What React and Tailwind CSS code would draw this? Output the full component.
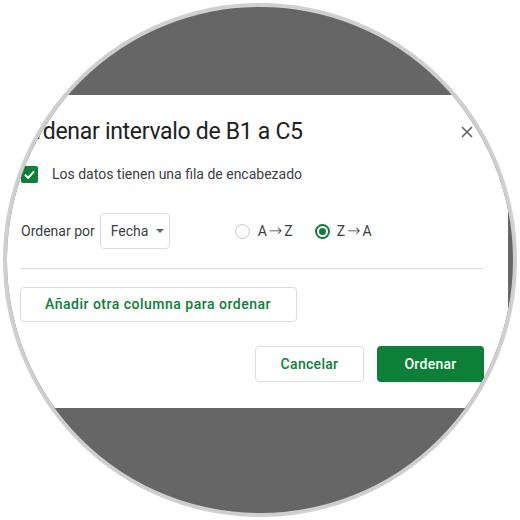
import React from "react";

const green = "#0b8036";

const Radio = ({ checked }) =>
  checked ? (
    <span className="w-[15px] h-[15px] rounded-full border-2 border-[#0b8036] flex items-center justify-center">
      <span className="w-[7px] h-[7px] rounded-full bg-[#0b8036]" />
    </span>
  ) : (
    <span className="w-[15px] h-[15px] rounded-full border border-[#c4c4c4]" />
  );

const Arrow = ({ from, to }) => (
  <span className="text-[14px] text-[#3c4043] flex items-center h-[18px]">
    {from}
    <span
      className="mx-[2px] text-[16px] leading-[18px] font-light"
      style={{ fontFamily: "'DejaVu Sans', sans-serif" }}
    >
      →
    </span>
    {to}
  </span>
);

const App = () => {
  return (
    <div
      className="w-[520px] h-[520px] bg-white flex items-center justify-center"
      style={{ fontFamily: "Roboto, 'Liberation Sans', sans-serif" }}
    >
      <div className="w-[514px] h-[514px] rounded-full border-4 border-[#cfcfcf] bg-[#666666] overflow-hidden flex flex-col">
        {/* gray band above the dialog */}
        <div className="h-[88px] shrink-0" />

        {/* dialog */}
        <div className="bg-white h-[313px] w-[501px] shrink-0 pl-[13px] pr-[24px] pt-[21px] flex flex-col">
          <div className="flex items-center justify-between h-[32px]">
            <h1 className="text-[23px] leading-[32px] text-[#202124] tracking-[-0.3px]">
              Ordenar intervalo de B1 a C5
            </h1>
            <svg width="12" height="12" viewBox="0 0 12 12" className="mr-[11px]">
              <path d="M1 1 L11 11 M11 1 L1 11" stroke="#5f6368" strokeWidth="1.6" />
            </svg>
          </div>

          {/* header checkbox */}
          <div className="flex items-center mt-[17px] h-[18px]">
            <span className="w-[17px] h-[17px] rounded-[2px] bg-[#0b8036] flex items-center justify-center ml-[1px]">
              <svg width="13" height="13" viewBox="0 0 13 13">
                <path d="M2 6.8 L5.2 9.8 L11 3.4" fill="none" stroke="white" strokeWidth="2" />
              </svg>
            </span>
            <span className="ml-[14px] text-[14px] text-[#3c4043]">
              Los datos tienen una fila de encabezado
            </span>
          </div>

          {/* sort row */}
          <div className="flex items-center mt-[30px] h-[36px]">
            <span className="text-[14px] text-[#3c4043] ml-[1px]">Ordenar por</span>
            <div className="ml-[5px] w-[70px] h-[36px] border border-[#dadce0] rounded-[4px] flex items-center pl-[10px]">
              <span className="text-[14px] text-[#3c4043]">Fecha</span>
              <svg width="8" height="4" viewBox="0 0 8 4" className="ml-[8px]">
                <path d="M0 0 L8 0 L4 4 Z" fill="#5f6368" />
              </svg>
            </div>
            <div className="ml-[65px] flex items-center gap-[8px]">
              <Radio />
              <Arrow from="A" to="Z" />
            </div>
            <div className="ml-[22px] flex items-center gap-[7px]">
              <Radio checked />
              <Arrow from="Z" to="A" />
            </div>
          </div>

          <div className="mt-[19px] h-px bg-[#dadce0] mr-[1px]" />

          <div className="mt-[18px]">
            <button className="h-[35px] w-[277px] border border-[#dadce0] rounded-[4px] text-left pl-[24px] text-[14px] font-medium text-[#0b8036] tracking-[0.5px]">
              Añadir otra columna para ordenar
            </button>
          </div>

          <div className="mt-[24px] flex justify-end gap-[13px]">
            <button className="h-[36px] w-[109px] border border-[#dadce0] rounded-[4px] text-[14px] font-medium text-[#0b8036] tracking-[0.3px]">
              Cancelar
            </button>
            <button
              className="h-[36px] w-[107px] rounded-[4px] text-[14px] font-medium text-white tracking-[0.3px]"
              style={{ backgroundColor: green }}
            >
              Ordenar
            </button>
          </div>
        </div>
      </div>
    </div>
  );
};

export default App;
